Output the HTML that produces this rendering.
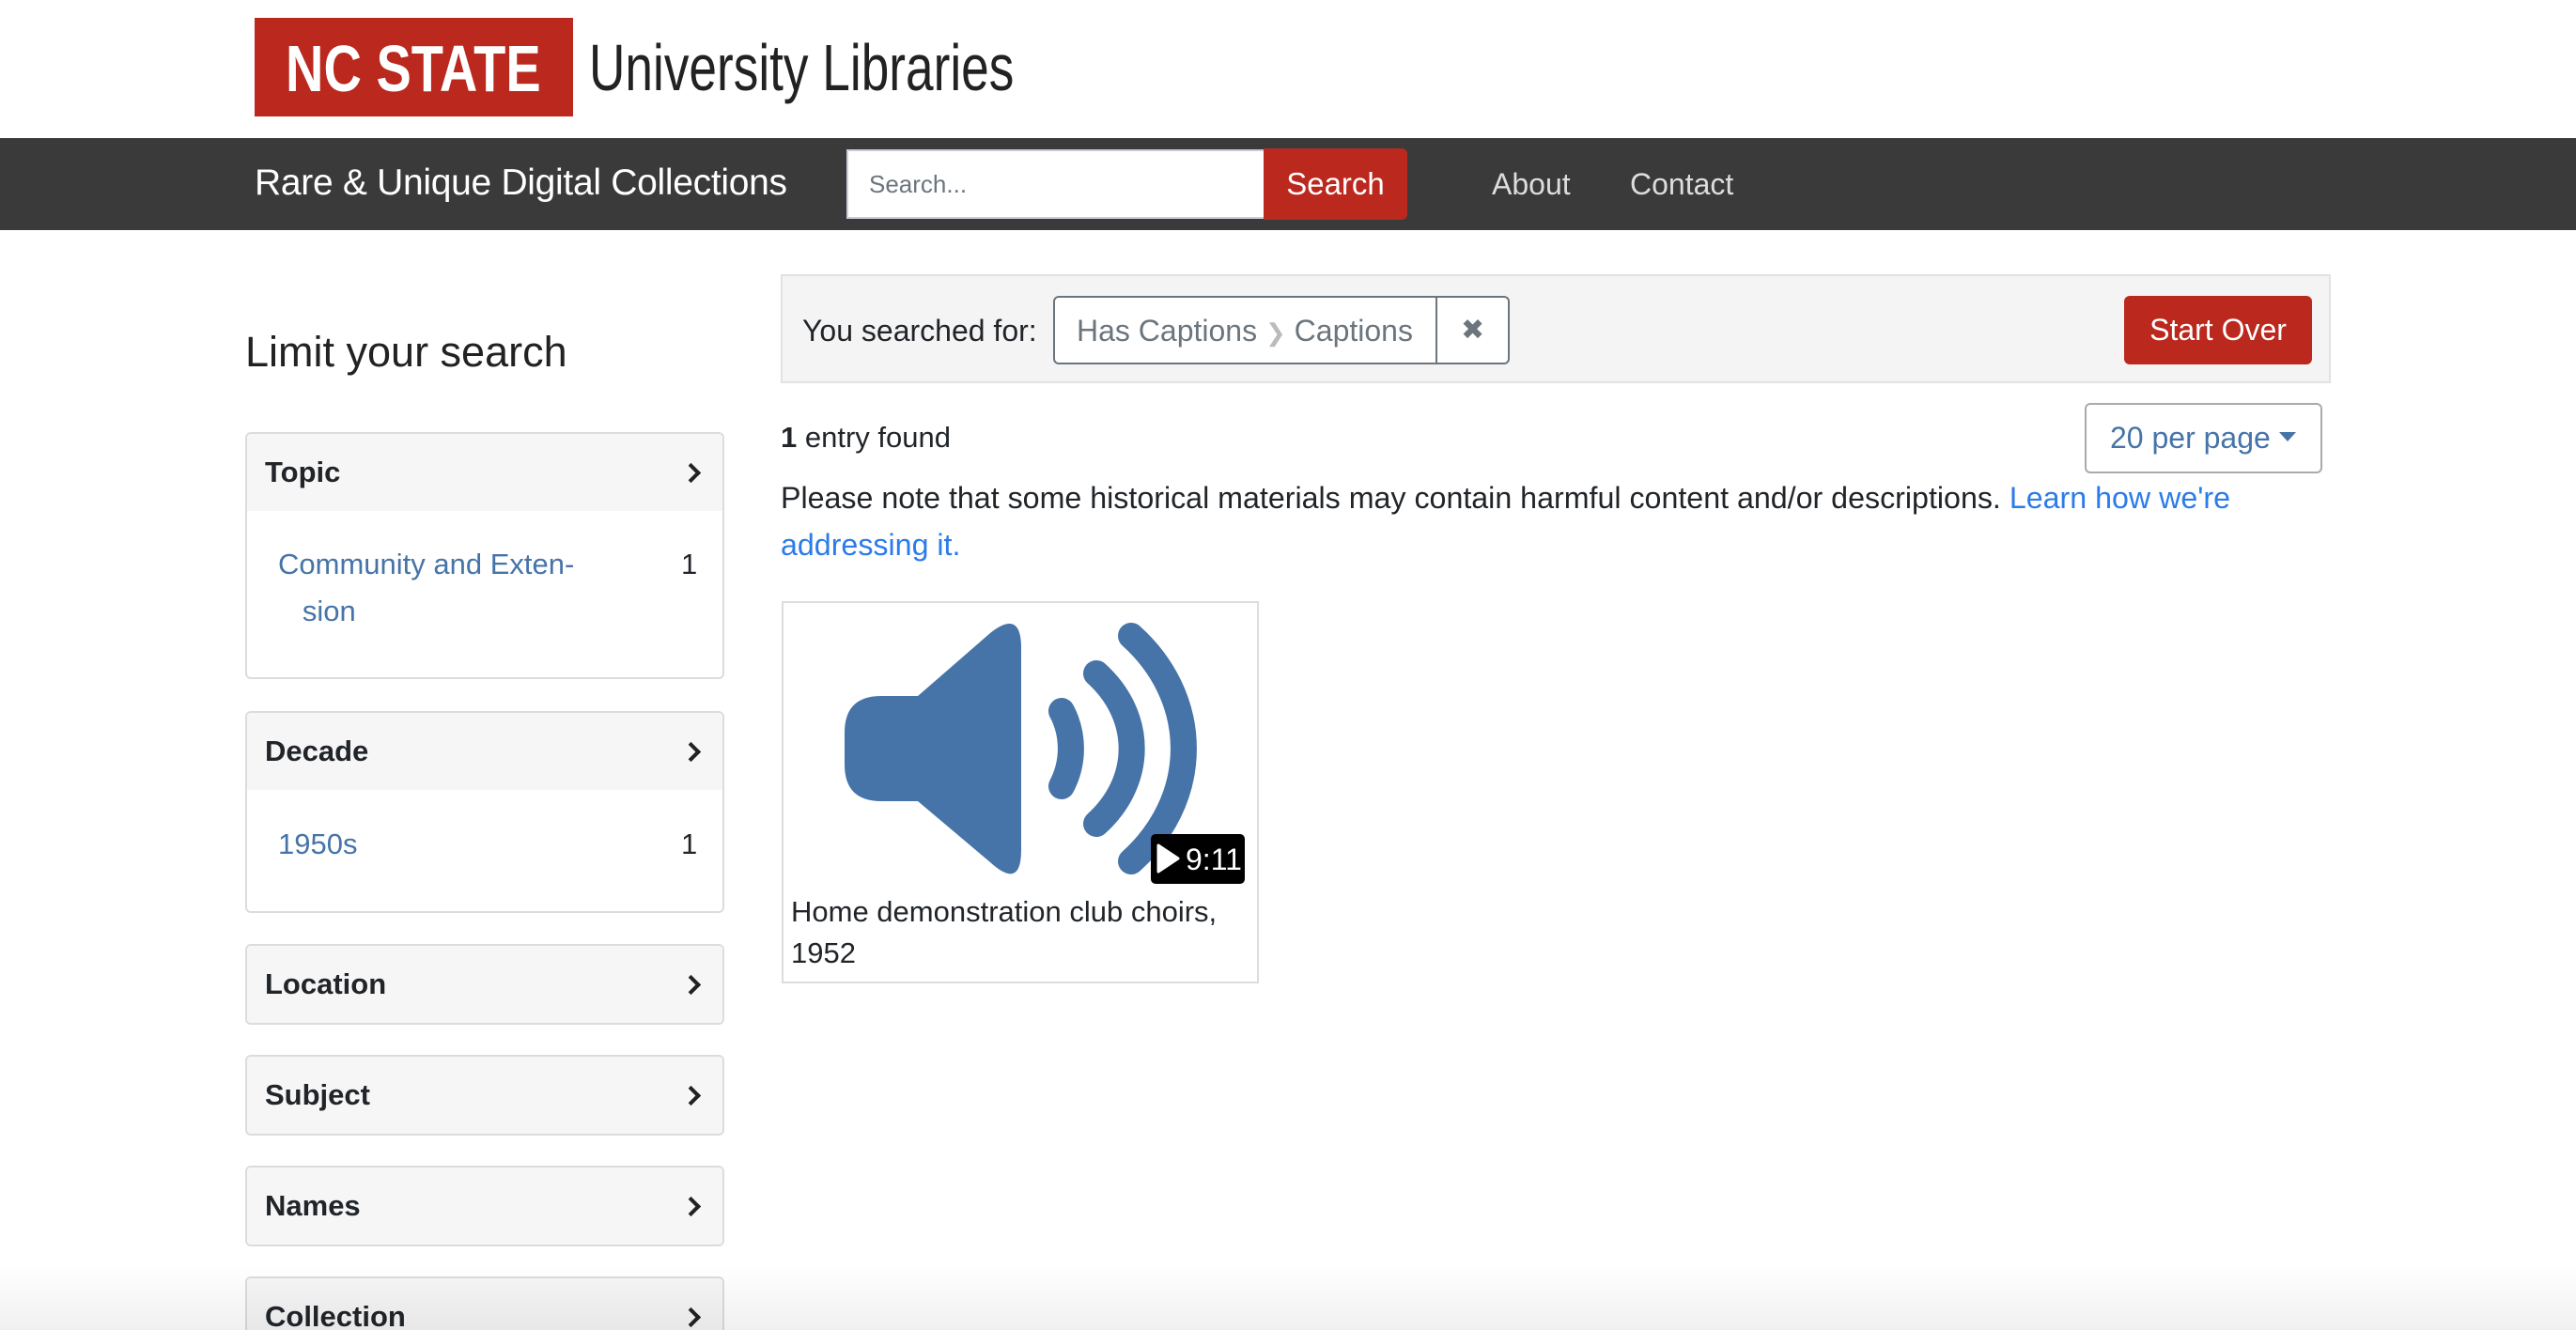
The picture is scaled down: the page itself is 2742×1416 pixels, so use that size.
<!DOCTYPE html>
<html><head><meta charset="utf-8"><style>
*{margin:0;padding:0;box-sizing:border-box}
html,body{width:2742px;height:1416px;overflow:hidden}
body{position:relative;background:#fff;font-family:"Liberation Sans",sans-serif;color:#212529}
.a{position:absolute;white-space:nowrap}
.fac{position:absolute;left:261px;width:510px;border:2px solid #dcdcdc;border-radius:6px;background:#fff;overflow:hidden}
.fh{height:82px;background:#f6f6f6;padding-left:19px;font-weight:bold;font-size:31px;line-height:82px;position:relative}
.fh:after{content:"";position:absolute;right:26px;top:34px;width:11px;height:11px;border-right:4px solid #222;border-top:4px solid #222;transform:rotate(45deg)}
.lnk{color:#4674a8}
</style></head><body>
<div class="a" style="left:271px;top:19px;width:339px;height:105px;background:#bb281d"></div>
<div class="a" style="left:304px;top:33px;font-size:70px;font-weight:bold;color:#fff;line-height:80px;transform:scaleX(0.8);transform-origin:left">NC STATE</div>
<div class="a" style="left:627px;top:32px;font-size:70px;color:#222;line-height:80px;transform:scaleX(0.76);transform-origin:left">University Libraries</div>
<div class="a" style="left:0;top:147px;width:2742px;height:98px;background:#3a3a3a"></div>
<div class="a" style="left:271px;top:170px;font-size:39px;color:#fff;line-height:50px;letter-spacing:-0.3px">Rare &amp; Unique Digital Collections</div>
<div class="a" style="left:901px;top:159px;width:446px;height:74px;background:#fff;border:2px solid #ccd"></div>
<div class="a" style="left:925px;top:178px;font-size:26px;color:#6c757d;line-height:36px">Search...</div>
<div class="a" style="left:1345px;top:158px;width:153px;height:76px;background:#bb281d;border-radius:0 6px 6px 0;color:#fff;font-size:33px;text-align:center;line-height:76px">Search</div>
<div class="a" style="left:1588px;top:175px;font-size:32px;color:#ddd;line-height:42px">About</div>
<div class="a" style="left:1735px;top:175px;font-size:32px;color:#ddd;line-height:42px">Contact</div>
<div class="a" style="left:261px;top:347px;font-size:45px;color:#222;line-height:56px">Limit your search</div>

<div class="fac" style="top:460px;height:263px"><div class="fh">Topic</div>
<div class="a lnk" style="left:33px;top:114px;font-size:31px;line-height:50px">Community and Exten-<br>&nbsp;&nbsp;&nbsp;sion</div>
<div class="a" style="left:462px;top:114px;font-size:31px;line-height:50px">1</div></div>
<div class="fac" style="top:757px;height:215px"><div class="fh">Decade</div>
<div class="a lnk" style="left:33px;top:115px;font-size:31px;line-height:50px">1950s</div>
<div class="a" style="left:462px;top:115px;font-size:31px;line-height:50px">1</div></div>
<div class="fac" style="top:1005px;height:86px"><div class="fh">Location</div></div>
<div class="fac" style="top:1123px;height:86px"><div class="fh">Subject</div></div>
<div class="fac" style="top:1241px;height:86px"><div class="fh">Names</div></div>
<div class="fac" style="top:1359px;height:86px"><div class="fh">Collection</div></div>

<div class="a" style="left:831px;top:292px;width:1650px;height:116px;background:#f4f4f4;border:2px solid #e2e2e2"></div>
<div class="a" style="left:854px;top:332px;font-size:32px;line-height:40px">You searched for:</div>
<div class="a" style="left:1121px;top:315px;width:486px;height:73px;border:2px solid #6c757d;border-radius:6px;background:#fff"></div>
<div class="a" style="left:1528px;top:316px;width:2px;height:71px;background:#6c757d"></div>
<div class="a" style="left:1146px;top:332px;font-size:32px;color:#6c757d;line-height:40px">Has Captions <span style="color:#bbb;font-size:26px">❯</span> Captions</div>
<div class="a" style="left:1555px;top:332px;font-size:30px;color:#6c757d;line-height:40px">✖</div>
<div class="a" style="left:2261px;top:315px;width:200px;height:73px;background:#bb281d;border-radius:6px;color:#fff;font-size:32px;line-height:73px;text-align:center">Start Over</div>

<div class="a" style="left:831px;top:446px;font-size:31px;line-height:40px"><b>1</b> entry found</div>
<div class="a" style="left:2219px;top:429px;width:253px;height:75px;border:2px solid #aaa;border-radius:6px;color:#4674a8;font-size:32px;line-height:71px;padding-left:25px">20 per page <span style="display:inline-block;width:0;height:0;border-left:9px solid transparent;border-right:9px solid transparent;border-top:10px solid #4674a8;vertical-align:middle;margin-top:-8px"></span></div>
<div class="a" style="left:831px;top:505px;font-size:32.2px;line-height:50px">Please note that some historical materials may contain harmful content and/or descriptions. <span style="color:#2b7bea">Learn how we're</span><br><span style="color:#2b7bea">addressing it.</span></div>

<div class="a" style="left:832px;top:640px;width:508px;height:407px;border:2px solid #ddd"></div>
<svg class="a" style="left:0;top:0" width="2742" height="1416">
<path d="M938 741 H977 L1054 674 Q1087 648 1087 690 V905 Q1087 948 1054 918 L977 853 H938 Q899 853 899 814 V780 Q899 741 938 741 Z" fill="#4674a8"/>
<g fill="none" stroke="#4674a8" stroke-width="28" stroke-linecap="round">
<path d="M1130 757 A80 83 0 0 1 1130 837"/>
<path d="M1167 717 A145 119 0 0 1 1167 877"/>
<path d="M1204 677 A200 173 0 0 1 1204 917"/>
</g>
<rect x="1225" y="888" width="100" height="53" rx="5" fill="#000"/>
<path d="M1233 900 L1254 914 L1233 928 Z" fill="#fff" stroke="#fff" stroke-width="3" stroke-linejoin="round"/>
<text x="1262" y="926" font-family="Liberation Sans" font-size="32" fill="#fff">9:11</text>
</svg>
<div class="a" style="left:842px;top:949px;font-size:31px;line-height:44px">Home demonstration club choirs,<br>1952</div>
<div class="a" style="left:0;top:1346px;width:2742px;height:70px;background:linear-gradient(rgba(0,0,0,0),rgba(0,0,0,0.06))"></div>
</body></html>
